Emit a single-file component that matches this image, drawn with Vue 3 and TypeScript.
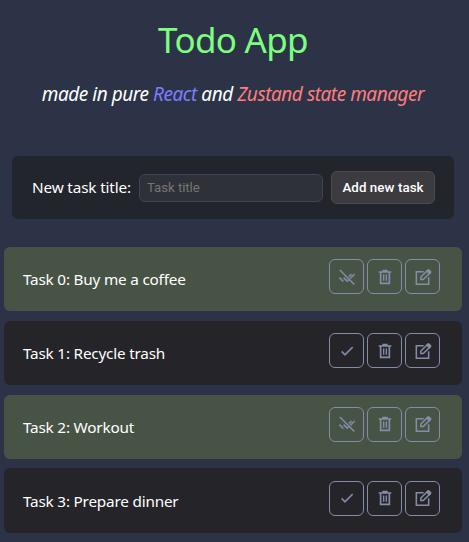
<script setup lang="ts">
import { ref } from 'vue'

interface Task {
  id: number
  title: string
  done: boolean
}

const newTitle = ref('')
const tasks = ref<Task[]>([
  { id: 0, title: 'Buy me a coffee', done: true },
  { id: 1, title: 'Recycle trash', done: false },
  { id: 2, title: 'Workout', done: true },
  { id: 3, title: 'Prepare dinner', done: false },
])

function addTask() {
  const title = newTitle.value.trim()
  if (!title) return
  tasks.value.push({ id: tasks.value.length, title, done: false })
  newTitle.value = ''
}

function removeTask(id: number) {
  tasks.value = tasks.value.filter((t) => t.id !== id)
}
</script>

<template>
  <main class="app">
    <h1 class="title">Todo App</h1>
    <p class="subtitle">
      made in pure <span class="react">React</span> and <span class="zustand">Zustand state manager</span>
    </p>

    <form class="new-task" @submit.prevent="addTask">
      <label class="label" for="task-title">New task title:</label>
      <input id="task-title" v-model="newTitle" class="field" type="text" placeholder="Task title" />
      <button class="add" type="submit">Add new task</button>
    </form>

    <ul class="list">
      <li v-for="task in tasks" :key="task.id" class="task" :class="{ done: task.done }">
        <span class="name">Task {{ task.id }}: {{ task.title }}</span>
        <div class="actions">
          <button class="icon" type="button" aria-label="Toggle" @click="task.done = !task.done">
            <svg v-if="task.done" viewBox="0 0 24 24" fill="currentColor" stroke="currentColor" stroke-width="0.6">
              <path d="M0.800 2.300 2.100 1 23.500 22.400l-1.300 1.300-7-7-2.900 2.900-5.900-5.900 1.400-1.400 4.500 4.500 1.500-1.500zM18 7l1.400 1.400-3.600 3.600-1.400-1.400zM22.600 7 24 8.400l-6.400 6.400-1.400-1.400zM1.400 12.300 7 17.900l-1.400 1.400L0 13.700z" />
            </svg>
            <svg v-else viewBox="0 0 24 24" fill="currentColor" stroke="currentColor" stroke-width="0.6">
              <path d="M9 16.170 4.830 12l-1.420 1.410L9 19 21 7l-1.410-1.410z" />
            </svg>
          </button>
          <button class="icon" type="button" aria-label="Delete" @click="removeTask(task.id)">
            <svg viewBox="0 0 24 24" fill="currentColor" fill-rule="evenodd">
              <path d="M8 1.200h8v2h5.500v2.400h-1.700V22.800H4.200V5.600H2.500V3.200H8zM6.700 5.600v14.800h10.600V5.600zm2.300 2.500h2v9.700H9zm4 0h2v9.700h-2z" />
            </svg>
          </button>
          <button class="icon" type="button" aria-label="Edit">
            <svg viewBox="0 0 24 24" fill="none" stroke="currentColor" stroke-width="2.300">
              <path d="M13 4H2v18.800h18.500V12.500" />
              <path d="M8.800 15.900v-3.800L18.300 2.600l3.700 3.700-9.600 9.600z" />
              <path d="m17.800 3.100 1.600-1.600q.7-.7 1.400 0l2.400 2.400q.7.7 0 1.400l-1.600 1.600z" fill="currentColor" />
            </svg>
          </button>
        </div>
      </li>
    </ul>
  </main>
</template>

<style>
body {
  margin: 0;
  background: #2c3347;
}
</style>

<style scoped>
.app {
  box-sizing: border-box;
  height: 542px;
  padding: 15px 7px 0 4px;
  overflow: hidden;
  color: #fff;
  font-family: 'Segoe UI', 'Noto Sans', sans-serif;
}

.title {
  margin: 0;
  height: 50px;
  text-align: center;
  font-size: 35px;
  font-weight: 400;
  line-height: 50px;
  letter-spacing: -0.7px;
  color: #7dff7d;
}

.subtitle {
  margin: 16px 0 0;
  height: 26px;
  text-align: center;
  white-space: nowrap;
  font-size: 19px;
  font-style: italic;
  line-height: 26px;
  letter-spacing: -0.46px;
}

.react {
  color: #7d7dff;
}

.zustand {
  color: #ff7d7d;
}

.new-task {
  box-sizing: border-box;
  display: flex;
  align-items: center;
  height: 63px;
  width: 442px;
  margin: 49px 0 0 8px;
  padding: 0 19px 0 20px;
  border-radius: 6px;
  background: #23252d;
}

.label {
  width: 107px;
  padding-bottom: 2px;
  white-space: nowrap;
  font-size: 15.300px;
  line-height: 20px;
  letter-spacing: -0.15px;
}

.field {
  box-sizing: border-box;
  width: 184px;
  height: 28px;
  padding: 0 7px;
  border: 1px solid #40435a;
  border-radius: 6px;
  outline: none;
  background: #2f3138;
  color: #fff;
  font: 13.333px Roboto, sans-serif;
  letter-spacing: -0.1px;
}

.field::placeholder {
  color: #757575;
}

.add {
  box-sizing: border-box;
  width: 104px;
  height: 33px;
  margin-left: 8px;
  padding: 0;
  border: 1px solid #4b4b4d;
  border-radius: 6px;
  background: #3c3c40;
  color: #fff;
  white-space: nowrap;
  font: 500 13.333px Roboto, sans-serif;
  letter-spacing: 0.07px;
}

.list {
  display: flex;
  flex-direction: column;
  gap: 9.5px;
  margin: 28.2px 0 0;
  padding: 0;
  list-style: none;
}

.task {
  box-sizing: border-box;
  display: flex;
  align-items: center;
  justify-content: space-between;
  height: 64.25px;
  padding: 0 22px 0 19px;
  border-radius: 6px;
  background: #242429;
}

.task.done {
  background: #475445;
}

.name {
  font-size: 15.300px;
  line-height: 20px;
  letter-spacing: -0.2px;
}

.actions {
  display: flex;
  gap: 3px;
  padding-bottom: 4.75px;
}

.icon {
  box-sizing: border-box;
  display: flex;
  align-items: center;
  justify-content: center;
  width: 35px;
  height: 35px;
  padding: 0;
  border: 1px solid #858ca8;
  border-radius: 6px;
  background: none;
  color: #858ca8;
}

.icon svg {
  width: 16px;
  height: 16px;
  overflow: visible;
}
</style>
